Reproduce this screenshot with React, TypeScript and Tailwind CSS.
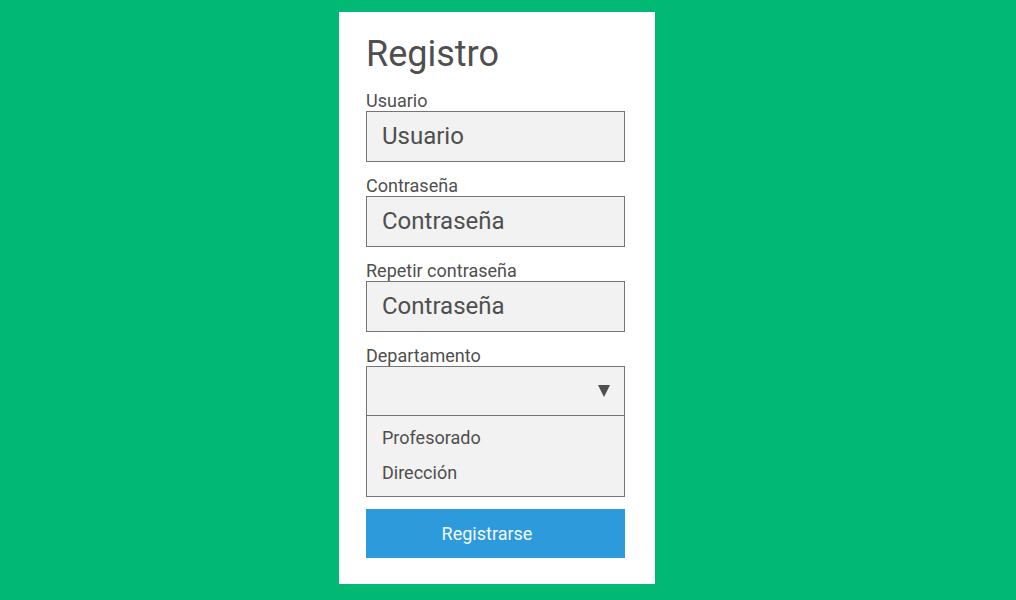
import React from "react";

const fields = [
  { label: "Usuario", placeholder: "Usuario", type: "text" },
  { label: "Contraseña", placeholder: "Contraseña", type: "password" },
  { label: "Repetir contraseña", placeholder: "Contraseña", type: "password" },
];

const App = () => (
  <div className="min-h-[600px] w-full bg-[#02b875] pt-[12px]" style={{ fontFamily: "Roboto, 'Liberation Sans', sans-serif" }}>
    <form className="ml-[339px] w-[316px] h-[572px] bg-white pl-[27px] pt-[21px] text-[#4f4f4f]">
      {/* Title */}
      <h1 className="text-[36px] leading-[42px] mb-[15px]">Registro</h1>

      {/* Text fields */}
      {fields.map((f) => (
        <div key={f.label} className="mb-[13px]">
          <label className="block text-[18px] leading-[21px]">{f.label}</label>
          <input
            type="text"
            placeholder={f.placeholder}
            className="block w-[259px] h-[51px] bg-[#f2f2f2] border border-[#757575] px-[15px] pb-[2px] text-[24px] text-[#4f4f4f] placeholder:text-[#4f4f4f] outline-none"
          />
        </div>
      ))}

      {/* Department select */}
      <div>
        <label className="block text-[18px] leading-[21px]">Departamento</label>
        <div className="w-[259px] bg-[#f2f2f2] border border-[#757575]">
          <div className="h-[49px] flex items-center justify-end pr-[14px] border-b border-[#757575]">
            <svg width="12" height="12" viewBox="0 0 12 12">
              <polygon points="0,0 12,0 6,12" fill="#4f4f4f" />
            </svg>
          </div>
          <ul className="pt-[4px] pb-[6px] text-[18px] leading-[35px] pl-[15px]">
            <li>Profesorado</li>
            <li>Dirección</li>
          </ul>
        </div>
      </div>

      {/* Submit */}
      <button
        type="button"
        className="mt-[12px] w-[259px] h-[49px] bg-[#2d9bdb] text-[#f4f8fb] text-[18px] pr-[17px]"
      >
        Registrarse
      </button>
    </form>
  </div>
);

export default App;
